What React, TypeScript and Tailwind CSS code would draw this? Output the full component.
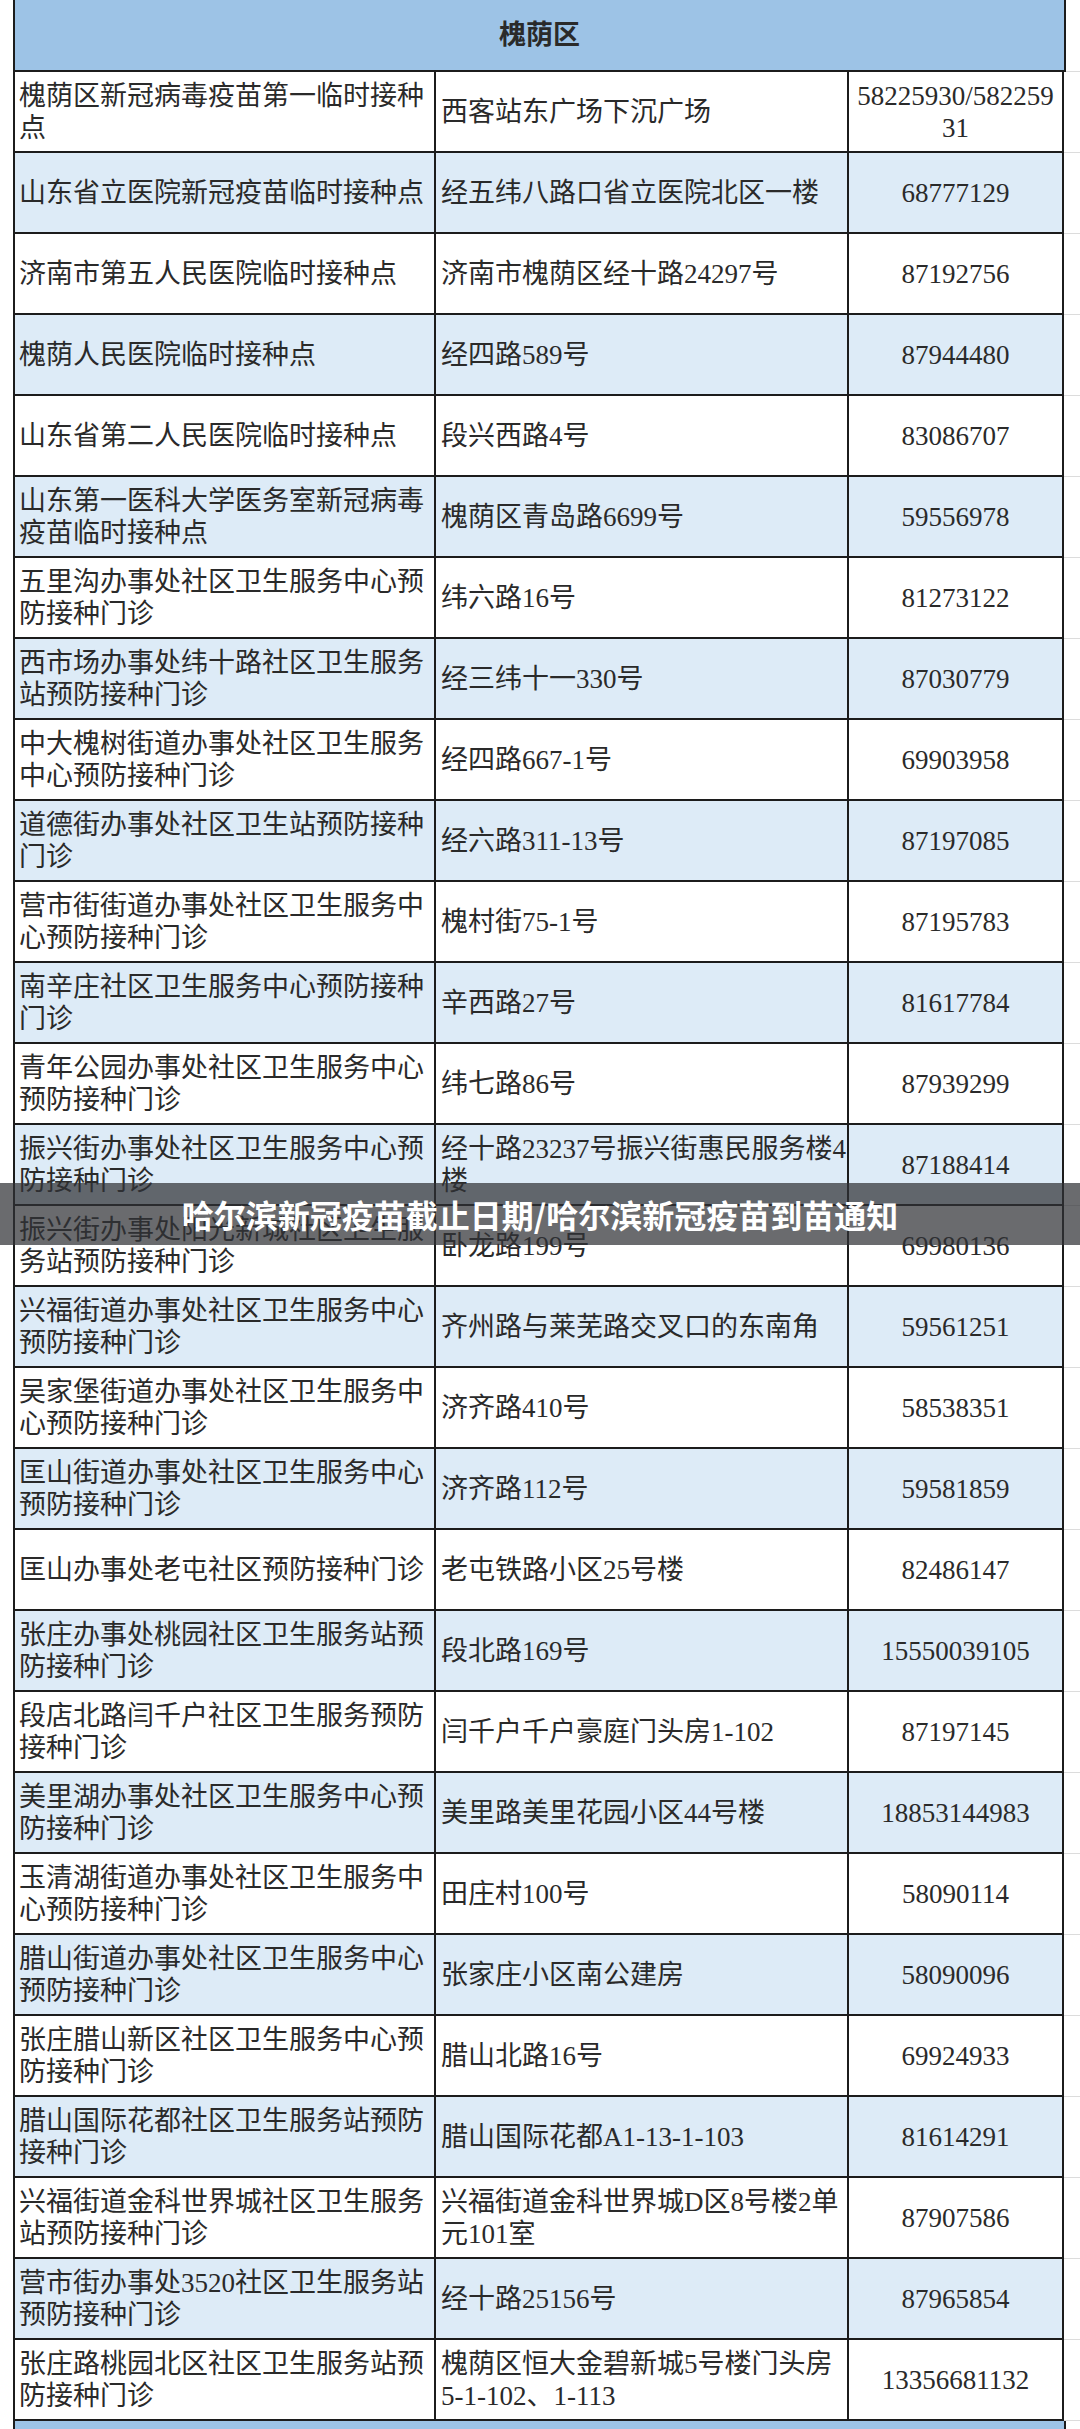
import React from "react";

type Row = { a: string[]; b: string[]; c: string[] };

const rows: Row[] = [
  { a: ["槐荫区新冠病毒疫苗第一临时接种", "点"], b: ["西客站东广场下沉广场"], c: ["58225930/582259", "31"] },
  { a: ["山东省立医院新冠疫苗临时接种点"], b: ["经五纬八路口省立医院北区一楼"], c: ["68777129"] },
  { a: ["济南市第五人民医院临时接种点"], b: ["济南市槐荫区经十路24297号"], c: ["87192756"] },
  { a: ["槐荫人民医院临时接种点"], b: ["经四路589号"], c: ["87944480"] },
  { a: ["山东省第二人民医院临时接种点"], b: ["段兴西路4号"], c: ["83086707"] },
  { a: ["山东第一医科大学医务室新冠病毒", "疫苗临时接种点"], b: ["槐荫区青岛路6699号"], c: ["59556978"] },
  { a: ["五里沟办事处社区卫生服务中心预", "防接种门诊"], b: ["纬六路16号"], c: ["81273122"] },
  { a: ["西市场办事处纬十路社区卫生服务", "站预防接种门诊"], b: ["经三纬十一330号"], c: ["87030779"] },
  { a: ["中大槐树街道办事处社区卫生服务", "中心预防接种门诊"], b: ["经四路667-1号"], c: ["69903958"] },
  { a: ["道德街办事处社区卫生站预防接种", "门诊"], b: ["经六路311-13号"], c: ["87197085"] },
  { a: ["营市街街道办事处社区卫生服务中", "心预防接种门诊"], b: ["槐村街75-1号"], c: ["87195783"] },
  { a: ["南辛庄社区卫生服务中心预防接种", "门诊"], b: ["辛西路27号"], c: ["81617784"] },
  { a: ["青年公园办事处社区卫生服务中心", "预防接种门诊"], b: ["纬七路86号"], c: ["87939299"] },
  { a: ["振兴街办事处社区卫生服务中心预", "防接种门诊"], b: ["经十路23237号振兴街惠民服务楼4", "楼"], c: ["87188414"] },
  { a: ["振兴街办事处阳光新城社区卫生服", "务站预防接种门诊"], b: ["卧龙路199号"], c: ["69980136"] },
  { a: ["兴福街道办事处社区卫生服务中心", "预防接种门诊"], b: ["齐州路与莱芜路交叉口的东南角"], c: ["59561251"] },
  { a: ["吴家堡街道办事处社区卫生服务中", "心预防接种门诊"], b: ["济齐路410号"], c: ["58538351"] },
  { a: ["匡山街道办事处社区卫生服务中心", "预防接种门诊"], b: ["济齐路112号"], c: ["59581859"] },
  { a: ["匡山办事处老屯社区预防接种门诊"], b: ["老屯铁路小区25号楼"], c: ["82486147"] },
  { a: ["张庄办事处桃园社区卫生服务站预", "防接种门诊"], b: ["段北路169号"], c: ["15550039105"] },
  { a: ["段店北路闫千户社区卫生服务预防", "接种门诊"], b: ["闫千户千户豪庭门头房1-102"], c: ["87197145"] },
  { a: ["美里湖办事处社区卫生服务中心预", "防接种门诊"], b: ["美里路美里花园小区44号楼"], c: ["18853144983"] },
  { a: ["玉清湖街道办事处社区卫生服务中", "心预防接种门诊"], b: ["田庄村100号"], c: ["58090114"] },
  { a: ["腊山街道办事处社区卫生服务中心", "预防接种门诊"], b: ["张家庄小区南公建房"], c: ["58090096"] },
  { a: ["张庄腊山新区社区卫生服务中心预", "防接种门诊"], b: ["腊山北路16号"], c: ["69924933"] },
  { a: ["腊山国际花都社区卫生服务站预防", "接种门诊"], b: ["腊山国际花都A1-13-1-103"], c: ["81614291"] },
  { a: ["兴福街道金科世界城社区卫生服务", "站预防接种门诊"], b: ["兴福街道金科世界城D区8号楼2单", "元101室"], c: ["87907586"] },
  { a: ["营市街办事处3520社区卫生服务站", "预防接种门诊"], b: ["经十路25156号"], c: ["87965854"] },
  { a: ["张庄路桃园北区社区卫生服务站预", "防接种门诊"], b: ["槐荫区恒大金碧新城5号楼门头房", "5-1-102、1-113"], c: ["13356681132"] },
];

function Lines({ lines }: { lines: string[] }) {
  return (
    <div className="flex flex-col">
      {lines.map((l, i) => (
        <span key={i} className="block whitespace-nowrap">
          {l}
        </span>
      ))}
    </div>
  );
}

export default function App() {
  return (
    <div
      className="relative w-[1080px] h-[2429px] overflow-hidden bg-white text-[#2a2a2a] text-[27px] leading-[32px]"
      style={{ fontFamily: '"Liberation Serif", "Noto Sans CJK SC", serif' }}
    >
      {/* header */}
      <div className="flex h-[72px]">
        <div className="w-[13px] shrink-0" />
        <div className="w-[1053px] shrink-0 flex items-center justify-center bg-[#9dc3e6] border-l-2 border-r-2 border-b-2 border-[#1c1c1c] font-bold">
          槐荫区
        </div>
        <div className="flex-1 border-b border-[#dcdcdc]" />
      </div>

      {rows.map((r, i) => {
        const bg = i % 2 === 1 ? "bg-[#ddebf7]" : "bg-white";
        return (
          <div key={i} className="flex h-[81px]">
            <div className="w-[13px] shrink-0" />
            <div className={`w-[423px] shrink-0 flex items-center pl-[4px] border-l-2 border-r-2 border-b-2 border-[#1c1c1c] ${bg}`}>
              <Lines lines={r.a} />
            </div>
            <div className={`w-[413px] shrink-0 flex items-center pl-[5px] border-r-2 border-b-2 border-[#1c1c1c] ${bg}`}>
              <Lines lines={r.b} />
            </div>
            <div className={`w-[215px] shrink-0 flex items-center justify-center text-center border-r-2 border-b-2 border-[#1c1c1c] ${bg}`}>
              <Lines lines={r.c} />
            </div>
            <div className="flex-1 border-b border-[#dcdcdc]" />
          </div>
        );
      })}

      {/* next header peeking */}
      <div className="flex h-[20px]">
        <div className="w-[13px] shrink-0" />
        <div className="w-[1053px] shrink-0 bg-[#9dc3e6] border-l-2 border-r-2 border-[#1c1c1c]" />
        <div className="flex-1" />
      </div>

      {/* overlay title band */}
      <div className="absolute left-0 right-0 top-[1183px] h-[62px] bg-[rgba(48,50,54,0.72)] flex items-center justify-center">
        <span
          className="text-white font-bold text-[32px] leading-none"
          style={{ fontFamily: '"Noto Sans CJK SC", sans-serif' }}
        >
          哈尔滨新冠疫苗截止日期/哈尔滨新冠疫苗到苗通知
        </span>
      </div>
    </div>
  );
}
